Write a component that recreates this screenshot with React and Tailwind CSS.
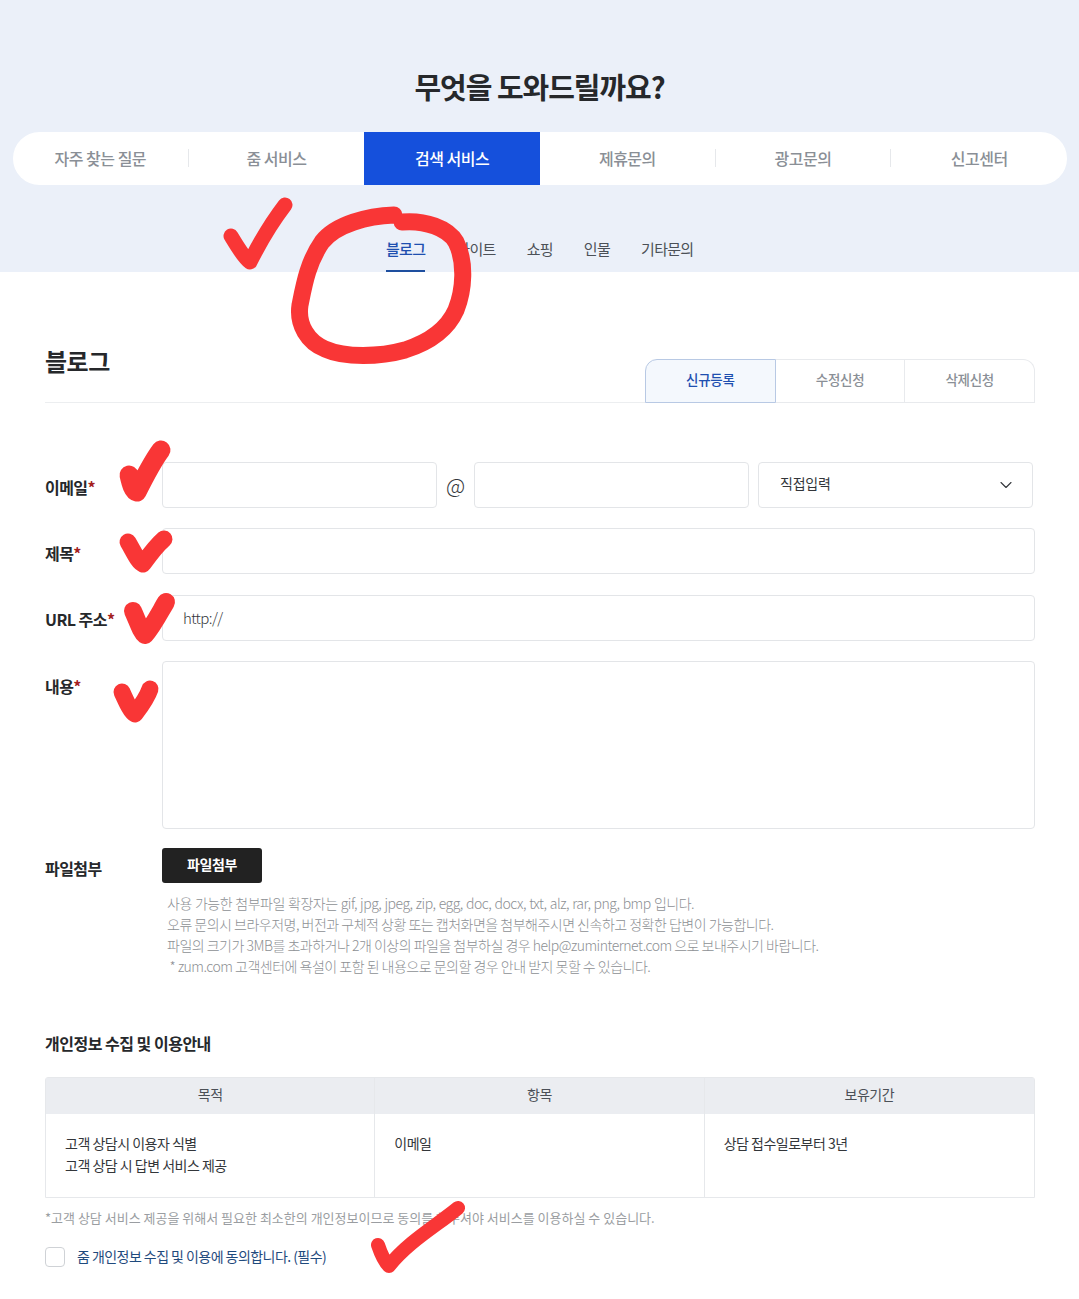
import { ChevronDown } from 'lucide-react';

const mainTabs = ['자주 찾는 질문', '줌 서비스', '검색 서비스', '제휴문의', '광고문의', '신고센터'];
const subTabs = ['블로그', '사이트', '쇼핑', '인물', '기타문의'];
const modeTabs = ['신규등록', '수정신청', '삭제신청'];

const inputBox = 'h-[46px] rounded-[4px] border border-[#e3e5e8] bg-white';

const Label = ({ text, required }) => (
  <div className="w-[117px] shrink-0 text-[16px] font-bold leading-[24px] tracking-[-0.55px] text-[#26282b]">
    {text}
    {required && <span className="text-[#a32020]">*</span>}
  </div>
);

// 빨간 펜 표시는 화면 위에 덧그린 것
const PenMarks = () => (
  <svg className="pointer-events-none absolute left-0 top-0" width="1079" height="1299" fill="none" stroke="#f93636" strokeLinecap="round" strokeLinejoin="round">
    <path d="M231 236 C237 246 244 258 250 262 C258 246 272 222 285 205" strokeWidth="15" />
    <path d="M394 215 C368 216 336 224 322 242 C308 262 304 285 300 305 C297 325 308 342 325 349 C345 358 380 357 405 350 C430 342 448 328 456 310 C464 290 466 262 456 242 C448 228 425 220 402 222" strokeWidth="17" />
    <path d="M129 475 C131 484 133 491 137 492 C144 478 152 462 161 450" strokeWidth="19" />
    <path d="M128 542 C134 552 138 562 143 564 C150 554 156 546 164 539" strokeWidth="17" />
    <path d="M133 611 C138 622 141 632 145 635 C153 626 160 612 166 602" strokeWidth="18" />
    <path d="M122 692 C127 703 131 712 135 714 C141 706 147 698 150 689" strokeWidth="17" />
    <path d="M378 1245 C381 1254 385 1262 389 1266 C408 1242 436 1226 458 1208" strokeWidth="14" />
  </svg>
);

const App = () => {
  return (
    <div className="relative h-[1299px] w-[1079px] overflow-hidden bg-white font-['Noto_Sans_CJK_KR','Noto_Sans',sans-serif]">
      {/* 상단 */}
      <div className="h-[272px] bg-[#ebf0f9] pt-[65px]">
        <h1 className="text-center text-[29px] font-bold leading-[42px] tracking-[-1.05px] text-[#26282b]">무엇을 도와드릴까요?</h1>
        <ul className="ml-[13px] mr-[12px] mt-[25px] flex h-[53px] overflow-hidden rounded-[27px] bg-white">
          {mainTabs.map((tab, i) => (
            <li key={tab} className={`flex flex-1 items-center justify-center pb-[2px] text-[16px] font-medium tracking-[-0.5px] ${i === 2 ? 'bg-[#1550dc] font-bold text-white' : 'text-[#8a8f96]'}`}>
              <span className="w-full text-center">{tab}</span>
              {i !== 1 && i !== 2 && i !== 5 && <span className="h-[18px] w-px shrink-0 bg-[#e6e8eb]" />}
            </li>
          ))}
        </ul>
        <ul className="ml-[386px] mt-[46px] flex gap-[31px] text-[15px] tracking-[-0.7px] text-[#4b5057]">
          {subTabs.map((tab, i) => (
            <li key={tab} className={`h-[41px] pt-[7px] leading-[22px] ${i === 0 ? 'border-b-2 border-[#1e4f9f] font-medium text-[#1e4fb0]' : ''}`}>{tab}</li>
          ))}
        </ul>
      </div>

      <div className="pl-[45px] pr-[44px]">
        {/* 제목 + 탭 */}
        <div className="flex h-[131px] items-end justify-between border-b border-[#eceef0]">
          <h2 className="mb-[25px] text-[24px] font-bold leading-[32px] tracking-[-0.5px] text-[#26282b]">블로그</h2>
          <div className="-mb-px flex h-[44px] w-[390px]">
            {modeTabs.map((tab, i) => (
              <div key={tab} className={`flex flex-1 items-center justify-center border pb-[4px] text-[13.5px] font-medium tracking-[-0.3px] ${i === 0 ? 'rounded-tl-[12px] border-[#b8c9e4] bg-[#f4f8fd] font-bold text-[#1e4fb0]' : 'border-l-0 border-[#e8eaed] text-[#8a8f96]'} ${i === 2 ? 'rounded-tr-[12px]' : ''}`}>{tab}</div>
            ))}
          </div>
        </div>

        {/* 폼 */}
        <div className="mt-[59px] flex items-center">
          <div className="pt-[4px]"><Label text="이메일" required /></div>
          <div className={`${inputBox} w-[275px]`} />
          <span className="w-[37px] text-center text-[21px] font-light leading-none text-[#33363a]">@</span>
          <div className={`${inputBox} w-[275px]`} />
          <div className={`${inputBox} ml-[9px] flex w-[275px] items-center justify-between pb-[3px] pl-[21px] pr-[16px] text-[14px] tracking-[-0.2px] text-[#33363a]`}>
            직접입력
            <ChevronDown size={20} strokeWidth={1.3} className="mt-[3px]" />
          </div>
        </div>
        <div className="mt-[20px] flex items-center">
          <div className="pt-[4px]"><Label text="제목" required /></div>
          <div className={`${inputBox} flex-1`} />
        </div>
        <div className="mt-[21px] flex items-center">
          <div className="pt-[2px]"><Label text="URL 주소" required /></div>
          <div className={`${inputBox} flex flex-1 items-center pl-[20px] text-[15px] font-light tracking-[-0.6px] text-[#33363a]`}>http://</div>
        </div>
        <div className="mt-[20px] flex">
          <div className="pt-[13px]"><Label text="내용" required /></div>
          <div className="h-[168px] flex-1 rounded-[4px] border border-[#e3e5e8]" />
        </div>
        <div className="mt-[19px] flex">
          <div className="pt-[8px]"><Label text="파일첨부" /></div>
          <div>
            <button className="h-[35px] w-[100px] rounded-[3px] bg-[#222222] pb-[2px] text-[14px] font-bold tracking-[-0.35px] text-white">파일첨부</button>
            <div className="ml-[5px] mt-[10px] text-[14px] font-light leading-[21px] tracking-[-0.5px] text-[#8d9094]">
              <p className="[word-spacing:0.6px]">사용 가능한 첨부파일 확장자는 gif, jpg, jpeg, zip, egg, doc, docx, txt, alz, rar, png, bmp 입니다.</p>
              <p>오류 문의시 브라우저명, 버전과 구체적 상황 또는 캡처화면을 첨부해주시면 신속하고 정확한 답변이 가능합니다.</p>
              <p>파일의 크기가 3MB를 초과하거나 2개 이상의 파일을 첨부하실 경우 help@zuminternet.com 으로 보내주시기 바랍니다.</p>
              <p>&nbsp;* zum.com 고객센터에 욕설이 포함 된 내용으로 문의할 경우 안내 받지 못할 수 있습니다.</p>
            </div>
          </div>
        </div>

        {/* 개인정보 */}
        <h3 className="mt-[54px] text-[16px] font-bold leading-[24px] tracking-[-0.5px] text-[#26282b]">개인정보 수집 및 이용안내</h3>
        <div className="mt-[22px] grid h-[121px] grid-cols-3 grid-rows-[36px_1fr] rounded-t-[3px] border border-[#e6e8eb] text-[14px] tracking-[-0.5px] text-[#33363a]">
          {['목적', '항목', '보유기간'].map((title, i) => (
            <div key={title} className={`flex items-center justify-center bg-[#ebedf1] pb-[3px] text-[#4b5057] ${i < 2 ? 'border-r border-[#e6e8eb]' : ''}`}>{title}</div>
          ))}
          <div className="border-r border-[#e6e8eb] px-[19px] pt-[18px] leading-[22px]">
            <p>고객 상담시 이용자 식별</p>
            <p>고객 상담 시 답변 서비스 제공</p>
          </div>
          <div className="border-r border-[#e6e8eb] px-[19px] pt-[18px] leading-[22px]">이메일</div>
          <div className="px-[19px] pt-[18px] leading-[22px]">상담 접수일로부터 3년</div>
        </div>
        <p className="mt-[10px] text-[13px] leading-[20px] text-[#9a9da1]">*고객 상담 서비스 제공을 위해서 필요한 최소한의 개인정보이므로 동의를 해주셔야 서비스를 이용하실 수 있습니다.</p>
        <div className="mt-[18px] flex items-center gap-[12px]">
          <span className="h-[20px] w-[20px] rounded-[4px] border border-[#cfd2d6]" />
          <span className="text-[14px] tracking-[-0.55px] text-[#1f4a7d]">줌 개인정보 수집 및 이용에 동의합니다. (필수)</span>
        </div>
      </div>

      <PenMarks />
    </div>
  );
};

export default App;
